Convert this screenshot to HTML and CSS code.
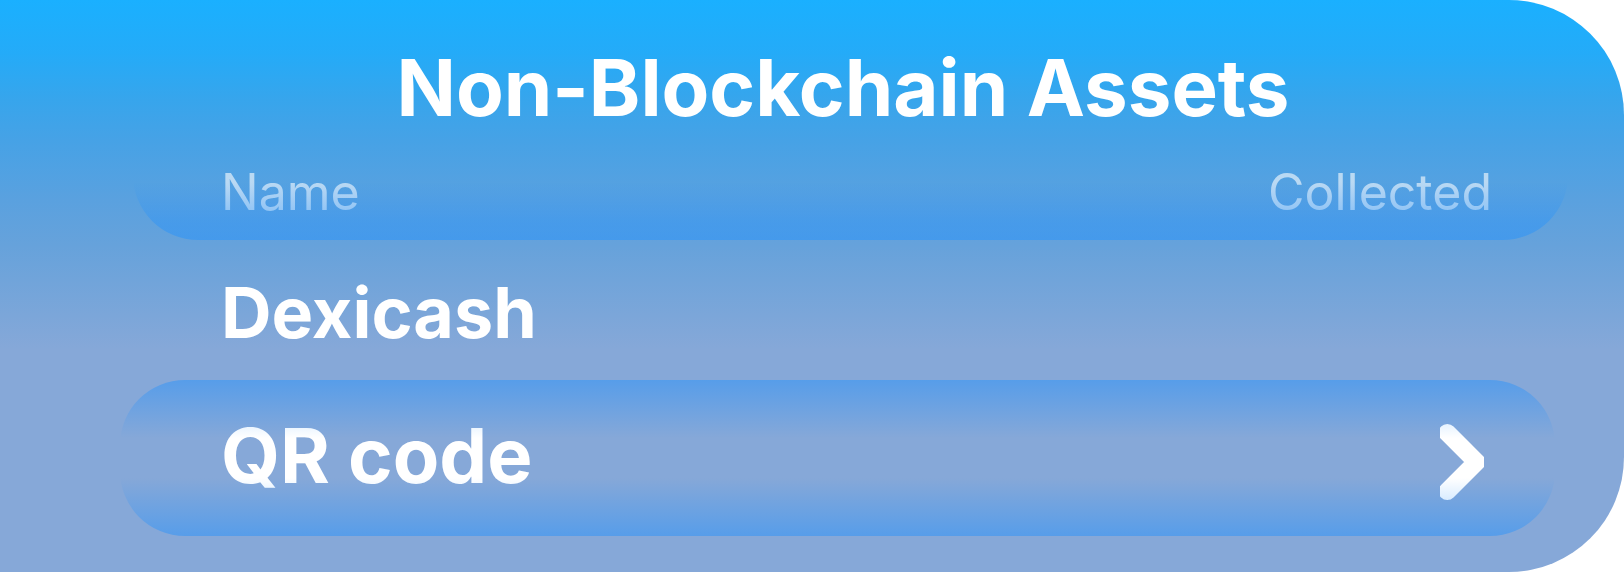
FILE: index.html
```html
<!DOCTYPE html>
<html lang="en">
<head>
<meta charset="utf-8">
<title>Non-Blockchain Assets</title>
<link rel="stylesheet" href="styles.css">
</head>
<body>
<main class="panel">
  <h1 class="panel-title" id="assets-title">Non-Blockchain Assets</h1>
  <table class="assets" aria-labelledby="assets-title">
    <thead class="assets-section">
      <tr class="assets-head">
        <th class="column-label" scope="col">Name</th>
        <th class="column-label" scope="col">Collected</th>
      </tr>
    </thead>
    <tbody class="assets-section">
      <tr class="asset">
        <td class="asset-name">Dexicash</td>
        <td class="asset-action"></td>
      </tr>
      <tr class="asset asset-pill">
        <td class="asset-name asset-name-large">QR code</td>
        <td class="asset-action">
          <button class="open-button" type="button" aria-label="Open QR code">
            <svg class="chevron" viewBox="0 0 44 76" aria-hidden="true">
              <path d="M7.3 8.8 36.5 38 7.3 67.2" fill="none" stroke="#fff" stroke-width="17.6" stroke-linecap="round" stroke-linejoin="miter"/>
            </svg>
          </button>
        </td>
      </tr>
    </tbody>
  </table>
</main>
</body>
</html>
```
FILE: styles.css
```css
* {
  box-sizing: border-box;
}

body {
  margin: 0;
  background: #fff;
  color: #fff;
  font-family: Inter, "Open Sans", sans-serif;
}

.panel {
  min-height: 100vh;
  padding: 42px 0 32px;
  border-radius: 0 115px 115px 0;
  background: linear-gradient(#1ab0ff 0, #24abf8 53px, #37a5ec 100px, #46a2e6 140px, #5aa1df 200px, #66a2db 245px, #86a8d8 350px);
}

.panel-title {
  margin: 0;
  padding-left: 62px;
  font-size: 78px;
  line-height: 92px;
  font-weight: 700;
  text-align: center;
}

.assets,
.assets-section {
  display: block;
}

.assets {
  margin-top: 10px;
}

.assets-head,
.asset {
  display: flex;
  align-items: center;
  justify-content: space-between;
}

.assets-head {
  position: relative;
  height: 96px;
  margin: 0 56px 0 133px;
  padding: 0 76px 0 88px;
  border-radius: 0 0 65px 65px;
  overflow: hidden;
}

.assets-head::after,
.asset-pill::after {
  content: "";
  position: absolute;
  inset: 0;
  pointer-events: none;
}

.assets-head::after {
  background: linear-gradient(rgba(30, 144, 255, 0) 38px, rgba(30, 144, 255, 0.36) 76px, rgba(30, 144, 255, 0.45) 96px);
}

.column-label {
  padding: 0;
  color: rgba(255, 255, 255, 0.6);
  font-size: 50px;
  line-height: 60px;
  font-weight: 400;
}

.asset {
  height: 140px;
  margin: 0 69px 0 120px;
  padding: 6px 71px 0 101px;
}

.asset-pill {
  position: relative;
  height: 156px;
  padding-top: 0;
  border-radius: 65px;
  overflow: hidden;
}

.asset-pill::after {
  background: linear-gradient(rgba(30, 144, 255, 0.45), rgba(30, 144, 255, 0) 58px, rgba(30, 144, 255, 0) 98px, rgba(30, 144, 255, 0.45));
}

.asset-name {
  padding: 0;
  font-size: 70px;
  line-height: 84px;
  font-weight: 700;
}

.asset-name-large {
  padding-bottom: 6px;
  font-size: 76px;
  line-height: 92px;
}

.asset-action {
  display: flex;
  padding: 0;
}

.open-button {
  display: flex;
  padding: 12px 0 4px;
  border: 0;
  background: none;
  cursor: pointer;
}

.chevron {
  width: 44px;
  height: 76px;
}
```
